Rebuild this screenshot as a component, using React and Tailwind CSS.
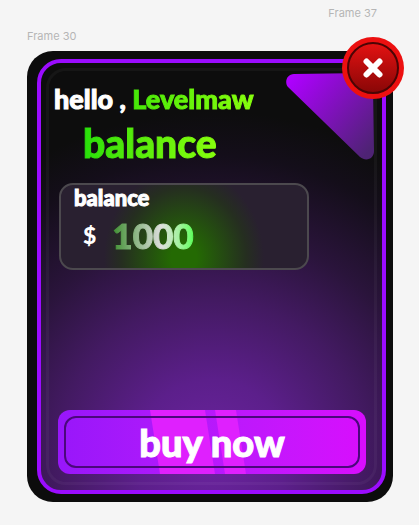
import React from "react";

const display = "font-['Fredoka_One','Lato',sans-serif] font-black";

function CloseButton() {
  return (
    <button
      type="button"
      aria-label="Close"
      className="absolute -top-[14px] -right-[11px] size-[62px] rounded-full bg-[#ec1010] p-[5px]"
    >
      <span className="flex size-full items-center justify-center rounded-full border-2 border-[#4a0505] bg-linear-to-b from-[#e31212] to-[#8a0707]">
        <svg viewBox="0 0 20 20" className="size-5" aria-hidden="true">
          <path d="M3.5 3.5 16.5 16.5M16.5 3.5 3.5 16.5" stroke="#fff" strokeWidth="6" strokeLinecap="round" />
        </svg>
      </span>
    </button>
  );
}

function CornerTriangle() {
  return (
    <svg viewBox="0 0 88 87" className="absolute top-[10px] right-[8px] h-[87px] w-[88px]" aria-hidden="true">
      <defs>
        <linearGradient id="corner" gradientUnits="userSpaceOnUse" x1="8" y1="2" x2="88" y2="72">
          <stop offset="0" stopColor="#ae00ff" />
          <stop offset="1" stopColor="#4e2374" />
        </linearGradient>
      </defs>
      <path
        d="M8 1 80 0Q87 0 87 7L88 78C88 86 80 89 74 84L2 14C-2 9 1 1 8 1Z"
        fill="url(#corner)"
      />
    </svg>
  );
}

function BalanceCard() {
  return (
    <section className="mt-4 mr-[57px] ml-px h-[87px] rounded-[14px] border-2 border-[#4c494e] bg-[radial-gradient(ellipse_80px_90px_at_50%_88%,#246a03_0%,#246a03_16%,#252e20_78%,transparent_100%)] bg-[#292030] px-[13px]">
      <h2 className={`${display} text-[22px] leading-[26px] text-white [-webkit-text-stroke:1px_white]`}>
        balance
      </h2>
      <p className={`${display} flex items-center gap-4 pl-[9px] leading-[48px]`}>
        <span className="text-[23px] text-white">$</span>
        <span className="bg-linear-to-r from-[#3b8f2c] via-[#dedede] via-60% to-[#55ff55] bg-clip-text text-[35px] text-transparent [-webkit-text-stroke:1px_transparent]">
          1000
        </span>
      </p>
    </section>
  );
}

function BuyButton() {
  return (
    <button
      type="button"
      className="relative mt-[140px] h-16 w-full overflow-hidden rounded-xl bg-linear-to-r from-[#9816fa] to-[#d80dfd] p-[6px]"
    >
      <svg viewBox="0 0 308 64" preserveAspectRatio="none" className="absolute inset-0 size-full" aria-hidden="true">
        <path d="M92 0h55l10 64h-55zM157 0h21l10 64h-21z" fill="#df20fe" />
      </svg>
      <span
        className={`${display} relative flex size-full items-center justify-center rounded-xl border-2 border-[#4b087c] text-[38px] leading-none text-white [-webkit-text-stroke:1px_white]`}
      >
        buy now
      </span>
    </button>
  );
}

export default function App() {
  return (
    <main className="min-h-screen bg-[#f5f5f5] pr-[26px] pb-6 pl-[27px] font-['Inter',sans-serif]">
      <p className="pt-[5px] pr-4 text-right text-[11px] leading-4 text-[#b5b5b5]">Frame 37</p>
      <p className="pt-[7px] text-[11px] leading-4 text-[#b5b5b5]">Frame 30</p>
      <div className="relative mt-[7px] rounded-[26px] bg-[#0c0c0c] pt-[8px] pr-[7px] pb-[8px] pl-[10px]">
        <div className="relative rounded-[24px] border-4 border-[#9b0cff] bg-[radial-gradient(circle_345px_at_50%_92%,#6b249f_0%,#5c1f8b_22%,#431a62_45%,#2a143b_65%,#140e1a_87%,#0d0d0d_100%)] p-[5px]">
          <div className="rounded-[20px] border-[3px] border-white/4 pt-[12px] pr-[8px] pb-[8px] pl-[9px]">
            <h1 className={`${display} -ml-1 text-[27px] leading-8 whitespace-nowrap text-white [-webkit-text-stroke:1px_white]`}>
              hello ,{" "}
              <span className="bg-linear-to-r from-[#45e808] to-[#86ff0d] bg-clip-text text-transparent [-webkit-text-stroke:1px_transparent]">
                Levelmaw
              </span>
            </h1>
            <p className={`${display} flex pt-[4px] pl-[25px] text-[39px] leading-[48px]`}>
              <span className="bg-linear-to-r from-[#25df0a] to-[#86ff0d] bg-clip-text text-transparent [-webkit-text-stroke:1px_transparent]">
                balance
              </span>
            </p>
            <BalanceCard />
            <BuyButton />
          </div>
          <CornerTriangle />
        </div>
        <CloseButton />
      </div>
    </main>
  );
}
